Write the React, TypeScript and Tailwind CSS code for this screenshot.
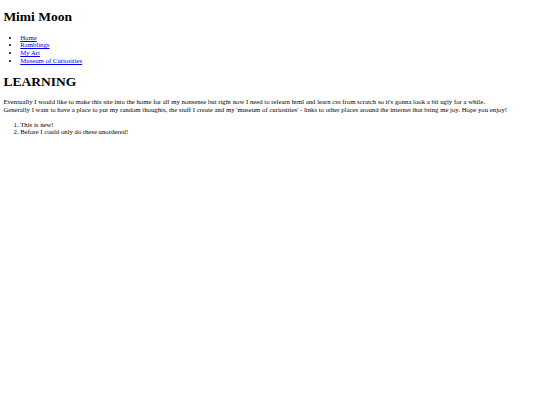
export default function App() {
  const links = ['Home', 'Ramblings', 'My Art', 'Museum of Curiosities']

  return (
    <div className="m-[3.375px] font-['Liberation_Serif','Times_New_Roman',serif] text-[6.75px] leading-[7.76px] text-black bg-white">
      <h1 className="text-[13.5px] leading-[15.5px] font-bold my-[9.05px]">Mimi Moon</h1>
      <ul className="list-disc pl-[16.875px] my-[6.75px]">
        {links.map((l) => (
          <li key={l}>
            <a href="#" className="text-[#0000ee] underline">
              {l}
            </a>
          </li>
        ))}
      </ul>
      <h1 className="text-[13.5px] leading-[15.5px] font-bold my-[9.05px]">LEARNING</h1>
      <p className="my-[6.75px]">
        Eventually I would like to make this site into the home for all my nonsense but right now I need to relearn html and learn css from scratch so it's gonna look a bit ugly for a while.
        <br />
        Generally I want to have a place to put my random thoughts, the stuff I create and my 'museum of curiosities' - links to other places around the internet that bring me joy. Hope you enjoy!
      </p>
      <ol className="list-decimal pl-[16.875px] my-[6.75px]">
        <li>This is new!</li>
        <li>Before I could only do these unordered!</li>
      </ol>
    </div>
  )
}
